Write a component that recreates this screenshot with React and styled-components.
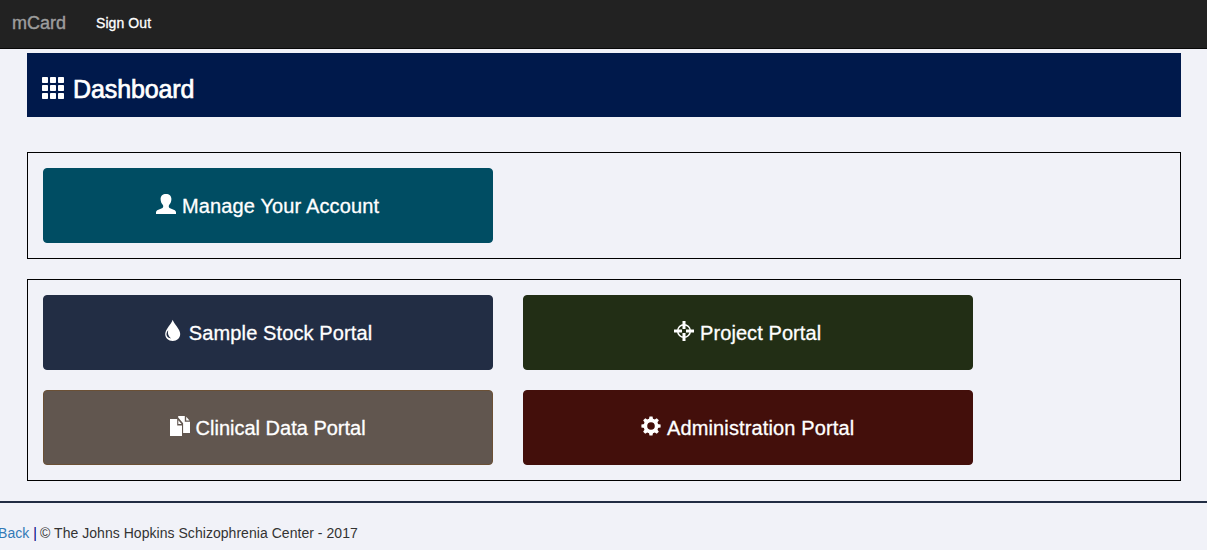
import React from "react";
import styled, { createGlobalStyle } from "styled-components";

const GlobalStyle = createGlobalStyle`
  *, *::before, *::after { box-sizing: border-box; }
  html, body { margin: 0; height: 100%; overflow: hidden; }
  body {
    background: #f1f2f8;
    color: #333;
    font-family: "Liberation Sans", Arial, sans-serif;
    font-size: 14px;
    line-height: 20px;
  }
`;

const Navbar = styled.nav`
  display: flex;
  align-items: center;
  height: 49px;
  padding: 0 12px 3px;
  gap: 30px;
  background: #222;
  border-bottom: 1px solid #080808;
`;

const Brand = styled.span`
  color: #9d9d9d;
  font-size: 18px;
  -webkit-text-stroke: 0.4px #9d9d9d;
`;

const NavLink = styled.a`
  color: #fff;
  letter-spacing: 0.08px;
  -webkit-text-stroke: 0.3px #fff;
`;

const Content = styled.main`
  padding: 4px 26px 0 27px;
`;

const PageHeader = styled.header`
  display: flex;
  align-items: center;
  gap: 9px;
  height: 64px;
  margin-bottom: 35px;
  padding: 8px 15px 0;
  background: #00194b;
  color: #fff;
`;

const Title = styled.h1`
  margin: 0;
  font-size: 25px;
  line-height: 28px;
  font-weight: 400;
  letter-spacing: -0.1px;
  -webkit-text-stroke: 0.7px #fff;
`;

const Panel = styled.section`
  display: grid;
  grid-template-columns: 450px 450px;
  gap: 20px 30px;
  margin-bottom: 20px;
  padding: 15px;
  border: 1px solid #000;
`;

const PortalButton = styled.button`
  display: flex;
  align-items: center;
  justify-content: center;
  gap: 5.8px;
  height: 75px;
  padding: 0 0.6px 0 0;
  border: 1px solid ${(p) => p.$border || p.$color};
  border-radius: 4px;
  background: ${(p) => p.$color};
  color: #fff;
  font: 20px/28px "Liberation Sans", Arial, sans-serif;
`;

const Label = styled.span`
  letter-spacing: ${(p) => p.$tracking};
  white-space: nowrap;
  -webkit-text-stroke: 0.3px #fff;
`;

const Icon = styled.svg`
  display: block;
  flex: none;
  width: ${(p) => p.$size || 20}px;
  height: ${(p) => p.$size || 20}px;
  margin-bottom: 3px;
  fill: currentColor;
  overflow: visible;
`;

const Footer = styled.footer`
  padding-top: 20px;
  border-top: 2px solid #222d44;
  white-space: nowrap;
`;

const FooterText = styled.div`
  margin-left: -2px;
  letter-spacing: 0.04px;
`;

const BackLink = styled.a`
  color: #337ab7;
`;

const Divider = styled.span`
  color: #000080;
  letter-spacing: -0.8px;
`;

const GridIcon = () => (
  <Icon $size={22} viewBox="0 0 22 22">
    {[0, 8, 16].map((y) =>
      [0, 8, 16].map((x) => (
        <rect key={`${x}-${y}`} x={x} y={y} width="6" height="6" rx="0.7" />
      ))
    )}
  </Icon>
);

const UserIcon = () => (
  <Icon viewBox="0 0 20 20">
    <path d="M10 0C6.700 0 4.600 1.900 4.600 5c0 2.500.9 4.600 2.300 6 .5.900.5 2.200-.4 2.900L1.200 16.200C.4 16.700 0 17.400 0 18.300V20h20v-1.700c0-.9-.4-1.600-1.200-2.100l-5.300-2.300c-.9-.7-.9-2-.4-2.900 1.400-1.400 2.300-3.500 2.300-6C15.400 1.900 13.300 0 10 0Z" />
  </Icon>
);

const DropIcon = () => (
  <Icon viewBox="0 0 20 20">
    <path
      fillRule="evenodd"
      d="M9.700-1.200C8.700 2.600 2.200 8.200 2.200 13.100c0 4.100 3.200 6.900 7.500 6.900s7.500-2.800 7.500-6.900C17.200 8.200 10.700 2.600 9.700-1.200ZM5.200 9.300c-.8 3.400.1 5.900 2.900 8.200-4.700-.6-6-4.600-2.900-8.200Z"
    />
  </Icon>
);

const TargetIcon = () => (
  <Icon viewBox="0 0 20 20">
    <path d="M8.500 0h3v8h-3ZM8.500 12h3v8h-3ZM0 8.500h8v3H0ZM12 8.500h8v3h-8Z" />
    <circle cx="10" cy="10" r="6.300" fill="none" stroke="currentColor" strokeWidth="1.500" />
  </Icon>
);

const FilesIcon = () => (
  <Icon viewBox="0 0 20 20">
    <path d="M0 3h7.200v6.500H12V20H0ZM8.300 4.200 11.600 8.100H8.300Z" />
    <path d="M8.200 0h6.600v5.800H20v11.200h-6.900V7.300L8.200 1.500ZM16.200.8 19.500 4.500h-3.300Z" />
  </Icon>
);

const GearIcon = () => (
  <Icon viewBox="0 0 20 20">
    <circle cx="10" cy="10" r="5.600" fill="none" stroke="currentColor" strokeWidth="3.600" />
    {[0, 45, 90, 135, 180, 225, 270, 315].map((angle) => (
      <path
        key={angle}
        d="M8.500.4h3l.6 3.200H7.900Z"
        transform={`rotate(${angle} 10 10)`}
      />
    ))}
  </Icon>
);

const PORTALS = [
  { label: "Sample Stock Portal", color: "#222d44", icon: DropIcon, tracking: "0.12px" },
  { label: "Project Portal", color: "#222e15", icon: TargetIcon, tracking: "0.08px" },
  { label: "Clinical Data Portal", color: "#61564f", border: "#6b5035", icon: FilesIcon, tracking: "0px" },
  { label: "Administration Portal", color: "#430f0b", icon: GearIcon, tracking: "0.13px" },
];

export default function App() {
  return (
    <>
      <GlobalStyle />
      <Navbar>
        <Brand>mCard</Brand>
        <NavLink>Sign Out</NavLink>
      </Navbar>
      <Content>
        <PageHeader>
          <GridIcon />
          <Title>Dashboard</Title>
        </PageHeader>
        <Panel>
          <PortalButton $color="#004d63">
            <UserIcon />
            <Label $tracking="0.14px">Manage Your Account</Label>
          </PortalButton>
        </Panel>
        <Panel>
          {PORTALS.map(({ label, color, border, icon: PortalIcon, tracking }) => (
            <PortalButton key={label} $color={color} $border={border}>
              <PortalIcon />
              <Label $tracking={tracking}>{label}</Label>
            </PortalButton>
          ))}
        </Panel>
      </Content>
      <Footer>
        <FooterText>
          <BackLink>Back</BackLink> <Divider>|</Divider> © The Johns Hopkins
          Schizophrenia Center - 2017
        </FooterText>
      </Footer>
    </>
  );
}
